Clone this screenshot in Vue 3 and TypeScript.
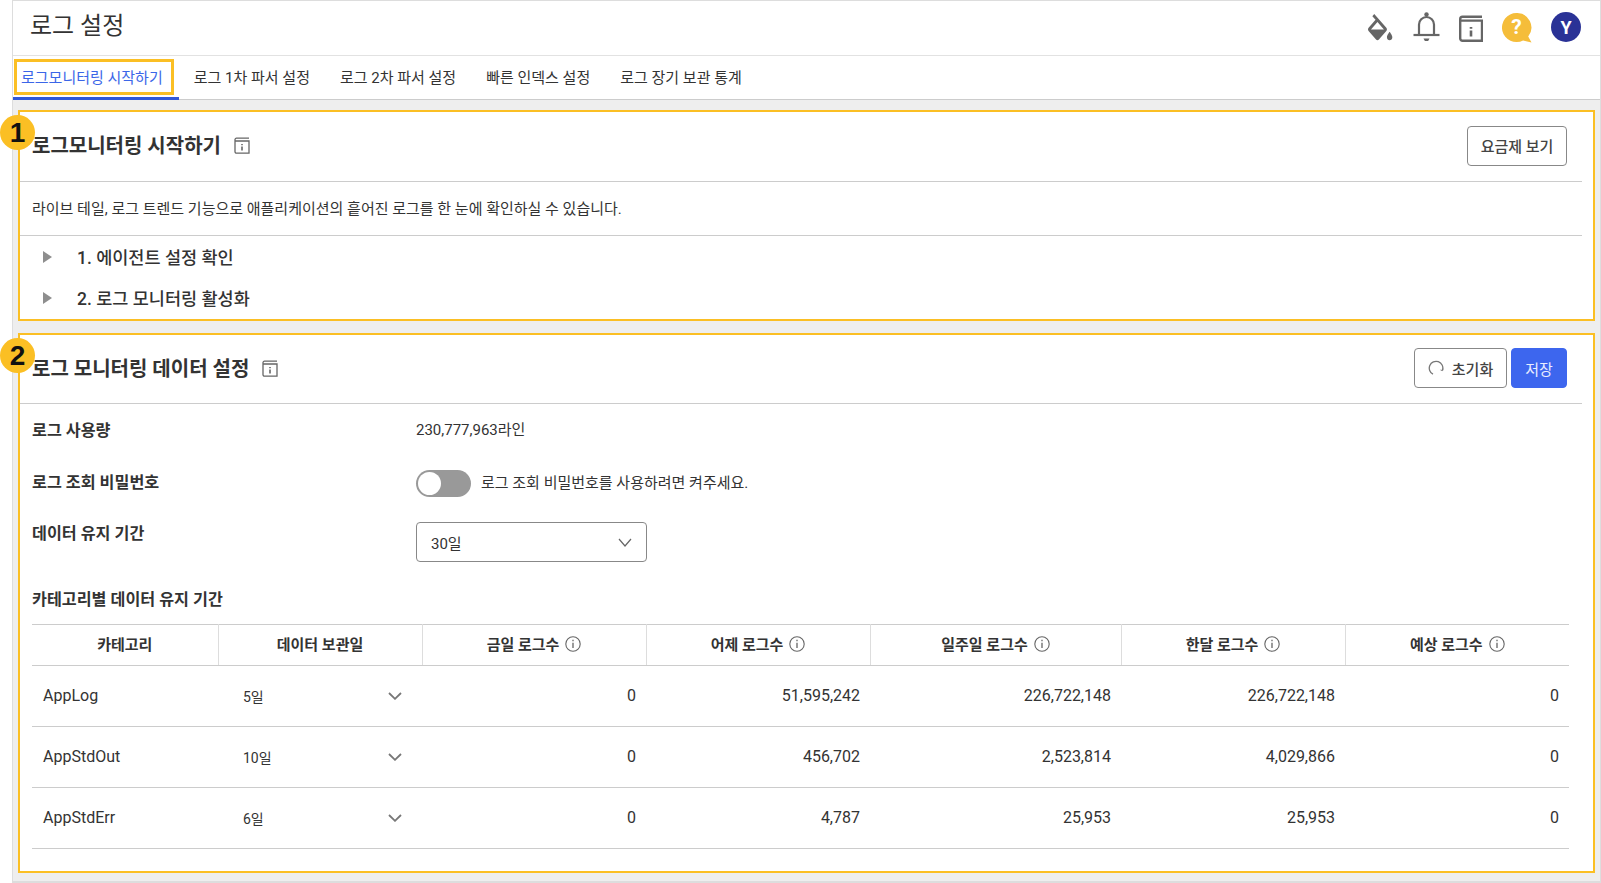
<template>
  <div class="page">
    <div class="frame">
      <header class="top-bar">
        <h1 class="page-title">로그 설정</h1>
        <div class="top-icons">
          <svg class="ic-bucket" viewBox="3 0 18.5 17.5" preserveAspectRatio="none">
            <path fill="#666" fill-rule="evenodd" d="M16.56 8.94L7.62 0 6.21 1.41l2.38 2.38-5.15 5.15c-.59.59-.59 1.54 0 2.12l5.5 5.5c.29.29.68.44 1.06.44s.77-.15 1.06-.44l5.5-5.5c.59-.58.59-1.53 0-2.12zM5.21 10L10 5.21 14.79 10H5.21zM19 11.5s-2 2.17-2 3.5c0 1.1.9 2 2 2s2-.9 2-2c0-1.33-2-3.5-2-3.5z" />
          </svg>
          <svg class="ic-bell" viewBox="0 0 27 30" fill="none" stroke="#666" stroke-width="2.2">
            <path d="M6 22.5V12.5a7.5 7.5 0 0 1 15 0v10" />
            <path d="M0.5 23h26" />
            <path d="M10.5 26.5h6l-1.4 2.4h-3.2z" fill="#666" stroke="none" />
            <circle cx="13.5" cy="2.4" r="2.2" fill="#666" stroke="none" />
          </svg>
          <svg class="ic-book" viewBox="0 0 24 27" fill="none" stroke="#666" stroke-width="2.4">
            <path d="M23 1.8H3.5a2.3 2.3 0 0 0-2.3 2.3v19.4a2.3 2.3 0 0 0 2.3 2.3H23V5.6H1.5" />
            <path d="M12 12v1.8M12 15.5v6" stroke-width="2.6" />
          </svg>
          <svg class="ic-help" viewBox="0 0 30 30">
            <path fill="#f5bd3a" d="M14.5 0a14.5 14.5 0 1 0 6.6 27.4l8.4 2.1-3.3-6A14.5 14.5 0 0 0 14.5 0z" />
            <text x="14.5" y="21" text-anchor="middle" class="help-mark">?</text>
          </svg>
          <div class="avatar">Y</div>
        </div>
      </header>

      <nav class="tabs">
        <a v-for="(tab, i) in tabs" :key="tab" class="tab" :class="{ active: i === 0 }">{{ tab }}</a>
      </nav>

      <main class="content">
        <section class="card">
          <span class="badge">1</span>
          <div class="card-head head-one">
            <h2 class="card-title">로그모니터링 시작하기</h2>
            <svg class="ic-title" viewBox="0 0 16 17" fill="none" stroke="#666" stroke-width="1.3">
              <path d="M15 1.2H2.5A1.5 1.5 0 0 0 1 2.7v12a1.5 1.5 0 0 0 1.5 1.5H15V4H1" />
              <path d="M8 7v1.2M8 9.5v4" stroke-width="1.6" />
            </svg>
            <div class="head-actions">
              <button class="btn btn-plan">요금제 보기</button>
            </div>
          </div>
          <p class="card-desc">라이브 테일, 로그 트렌드 기능으로 애플리케이션의 흩어진 로그를 한 눈에 확인하실 수 있습니다.</p>
          <ul class="steps">
            <li v-for="step in steps" :key="step" class="step">
              <span class="caret"></span>
              <span>{{ step }}</span>
            </li>
          </ul>
        </section>

        <section class="card card-data">
          <span class="badge">2</span>
          <div class="card-head head-two">
            <h2 class="card-title">로그 모니터링 데이터 설정</h2>
            <svg class="ic-title" viewBox="0 0 16 17" fill="none" stroke="#666" stroke-width="1.3">
              <path d="M15 1.2H2.5A1.5 1.5 0 0 0 1 2.7v12a1.5 1.5 0 0 0 1.5 1.5H15V4H1" />
              <path d="M8 7v1.2M8 9.5v4" stroke-width="1.6" />
            </svg>
            <div class="head-actions">
              <button class="btn btn-reset">
                <svg class="ic-reset" viewBox="0 0 16 16" fill="none" stroke="#777" stroke-width="1.3">
                  <path d="M5 14.2A6.8 6.8 0 1 1 14.6 10" />
                  <path d="M14.8 8.6l-.2 2-2-.6" stroke-width="1" />
                </svg>
                초기화
              </button>
              <button class="btn btn-save">저장</button>
            </div>
          </div>

          <div class="form">
            <div class="form-row row-usage">
              <span class="form-label">로그 사용량</span>
              <span class="form-value">230,777,963라인</span>
            </div>
            <div class="form-row row-pass">
              <span class="form-label">로그 조회 비밀번호</span>
              <span class="toggle"><span class="knob"></span></span>
              <span class="form-value">로그 조회 비밀번호를 사용하려면 켜주세요.</span>
            </div>
            <div class="form-row row-keep">
              <span class="form-label">데이터 유지 기간</span>
              <div class="select">
                <span>30일</span>
                <svg viewBox="0 0 14 9" fill="none" stroke="#666" stroke-width="1.2" class="ic-select">
                  <path d="M1 1l6 7 6-7" />
                </svg>
              </div>
            </div>
            <h3 class="form-label sub-title">카테고리별 데이터 유지 기간</h3>
          </div>

          <table class="log-table">
            <colgroup>
              <col v-for="w in colWidths" :key="w.id" :style="{ width: w.px + 'px' }" />
            </colgroup>
            <thead>
              <tr>
                <th>카테고리</th>
                <th>데이터 보관일</th>
                <th v-for="h in countHeads" :key="h">
                  <span class="th-inner">
                    {{ h }}
                    <svg class="ic-info" viewBox="0 0 16 16" fill="none" stroke="#666">
                      <circle cx="8" cy="8" r="7.2" stroke-width="1.1" />
                      <path d="M8 3.8v1.5M8 6.8v5.2" stroke-width="1.3" />
                    </svg>
                  </span>
                </th>
              </tr>
            </thead>
            <tbody>
              <tr v-for="row in rows" :key="row.name">
                <td class="cell-name">{{ row.name }}</td>
                <td class="cell-keep">
                  <div class="cell-select">
                    <span>{{ row.keep }}</span>
                    <svg viewBox="0 0 14 8" fill="none" stroke="#777" stroke-width="1.8" class="ic-chevron">
                      <path d="M1 1l6 5.8L13 1" />
                    </svg>
                  </div>
                </td>
                <td v-for="(n, i) in row.counts" :key="i" class="cell-num">{{ n }}</td>
              </tr>
            </tbody>
          </table>
        </section>
      </main>
    </div>
  </div>
</template>

<script setup lang="ts">
const tabs = ['로그모니터링 시작하기', '로그 1차 파서 설정', '로그 2차 파서 설정', '빠른 인덱스 설정', '로그 장기 보관 통계']
const steps = ['1. 에이전트 설정 확인', '2. 로그 모니터링 활성화']
const countHeads = ['금일 로그수', '어제 로그수', '일주일 로그수', '한달 로그수', '예상 로그수']
const colWidths = [186, 204, 224, 224, 251, 224, 224].map((px, id) => ({ id, px }))

const rows = [
  { name: 'AppLog', keep: '5일', counts: ['0', '51,595,242', '226,722,148', '226,722,148', '0'] },
  { name: 'AppStdOut', keep: '10일', counts: ['0', '456,702', '2,523,814', '4,029,866', '0'] },
  { name: 'AppStdErr', keep: '6일', counts: ['0', '4,787', '25,953', '25,953', '0'] },
]
</script>

<style>
html,
body {
  margin: 0;
  background: #fff;
}
</style>

<style scoped>
.page {
  width: 1601px;
  height: 883px;
  padding-left: 12px;
  box-sizing: border-box;
  overflow: hidden;
  font-family: 'Roboto', 'Noto Sans CJK KR', sans-serif;
  color: #222;
}

.frame {
  height: 883px;
  box-sizing: border-box;
  display: flex;
  flex-direction: column;
  border: 1px solid #ddd;
  border-bottom-width: 2px;
}

.top-bar {
  height: 55px;
  flex: none;
  box-sizing: border-box;
  display: flex;
  align-items: center;
  justify-content: space-between;
  padding: 0 19px 0 17px;
  border-bottom: 1px solid #e2e2e2;
}

.page-title {
  margin: 0 0 9px;
  font-size: 24px;
  font-weight: 400;
  color: #333;
}

.top-icons {
  display: flex;
  align-items: center;
  gap: 0;
}

.ic-bucket {
  width: 25px;
  height: 27px;
  margin-right: 20px;
  margin-top: -1px;
}

.ic-bell {
  width: 27px;
  height: 30px;
  margin-right: 19px;
  margin-top: -2px;
}

.ic-book {
  width: 24px;
  height: 27px;
  margin-right: 19px;
}

.ic-help {
  width: 30px;
  height: 30px;
  margin-right: 19px;
  margin-top: -1px;
}

.help-mark {
  font-family: 'Roboto', sans-serif;
  font-size: 21px;
  font-weight: 700;
  fill: #fff;
}

.avatar {
  width: 30px;
  height: 30px;
  border-radius: 50%;
  background: #2a3296;
  color: #fff;
  font-size: 18px;
  font-weight: 700;
  display: flex;
  align-items: center;
  justify-content: center;
  margin-top: -2px;
}

.tabs {
  height: 44px;
  flex: none;
  box-sizing: border-box;
  display: flex;
  border-bottom: 1px solid #ccc;
}

.tab {
  position: relative;
  display: flex;
  align-items: center;
  height: 44px;
  box-sizing: border-box;
  padding: 0 15px;
  font-size: 15px;
  color: #333;
  white-space: nowrap;
  border-bottom: 3px solid transparent;
}

.tab.active {
  padding: 0 16px 0 8px;
  color: #3b66e8;
  border-bottom-color: #3058d8;
}

.tab.active::before {
  content: '';
  position: absolute;
  left: 1px;
  top: 3px;
  width: 160px;
  height: 36px;
  box-sizing: border-box;
  border: 3px solid #fbbf24;
}

.content {
  flex: 1;
  display: flex;
  flex-direction: column;
  gap: 12px;
  padding: 10px 5px 0;
  background: #eee;
}

.card {
  position: relative;
  flex: none;
  height: 211px;
  box-sizing: border-box;
  background: #fff;
  border: 2px solid #fbbf24;
}

.card-data {
  height: 540px;
}

.badge {
  position: absolute;
  left: -20px;
  top: 3px;
  width: 35px;
  height: 35px;
  border-radius: 50%;
  background: #fbbf24;
  color: #111;
  font-family: 'Liberation Sans', sans-serif;
  font-size: 28px;
  font-weight: 700;
  display: flex;
  align-items: center;
  justify-content: center;
  z-index: 1;
}

.card-head {
  display: flex;
  align-items: center;
  box-sizing: border-box;
  margin-right: 11px;
  padding: 0 15px 2px 12px;
  border-bottom: 1px solid #ccc;
}

.head-one {
  height: 70px;
}

.head-two {
  height: 69px;
}

.card-title {
  margin: 0 0 2px;
  font-size: 20px;
  font-weight: 700;
  color: #333;
}

.ic-title {
  width: 16px;
  height: 17px;
  margin-left: 13px;
}

.head-actions {
  margin-left: auto;
  display: flex;
  gap: 4px;
}

.btn {
  height: 40px;
  box-sizing: border-box;
  border-radius: 4px;
  border: 1px solid #888;
  background: #fff;
  font-family: inherit;
  font-size: 15px;
  font-weight: 500;
  color: #444;
  display: flex;
  align-items: center;
  justify-content: center;
  padding: 0;
}

.btn-plan {
  width: 100px;
}

.btn-reset {
  width: 93px;
  gap: 8px;
}

.ic-reset {
  width: 16px;
  height: 16px;
}

.btn-save {
  width: 56px;
  background: #3d66ee;
  border-color: #3d66ee;
  color: #e8edff;
  font-weight: 400;
}

.card-desc {
  height: 54px;
  margin: 0 11px 0 0;
  padding: 0 0 3px 12px;
  box-sizing: border-box;
  display: flex;
  align-items: center;
  font-size: 15px;
  color: #333;
  border-bottom: 1px solid #ccc;
}

.steps {
  margin: 0;
  padding: 0;
  list-style: none;
}

.step {
  height: 41px;
  display: flex;
  align-items: center;
  font-size: 17.5px;
  font-weight: 500;
  color: #333;
}

.caret {
  width: 0;
  height: 0;
  margin: 0 25px 0 23px;
  border-left: 9px solid #8e8e8e;
  border-top: 6px solid transparent;
  border-bottom: 6px solid transparent;
}

.form {
  padding: 14px 15px 0 12px;
}

.form-row {
  display: flex;
  align-items: flex-start;
}

.form-label {
  flex: none;
  width: 384px;
  margin: 0;
  font-size: 16.2px;
  font-weight: 700;
  line-height: 24px;
  color: #333;
}

.form-value {
  font-size: 15px;
  line-height: 24px;
  color: #333;
}

.row-usage {
  height: 24px;
  margin-bottom: 27px;
}

.row-usage .form-label {
  margin-top: 1px;
}

.row-pass {
  height: 28px;
  margin-bottom: 25px;
  align-items: center;
}

.row-pass .form-label {
  margin-top: -1px;
}

.toggle {
  width: 55px;
  height: 27px;
  border-radius: 14px;
  background: #999;
  display: flex;
  align-items: center;
  padding-left: 2px;
  box-sizing: border-box;
  margin-right: 10px;
}

.knob {
  width: 23px;
  height: 23px;
  border-radius: 50%;
  background: #fff;
}

.select {
  width: 231px;
  height: 40px;
  box-sizing: border-box;
  border: 1px solid #888;
  border-radius: 4px;
  display: flex;
  align-items: center;
  justify-content: space-between;
  padding: 0 14px;
  font-size: 15px;
  color: #333;
}

.ic-select {
  width: 14px;
  height: 9px;
}

.sub-title {
  width: auto;
  margin-top: 26px;
}

.log-table {
  width: 1537px;
  margin: 12px 0 0 12px;
  table-layout: fixed;
  border-collapse: collapse;
  border-top: 1px solid #ccc;
  color: #333;
}

.log-table th {
  height: 37px;
  padding: 0 0 3px;
  font-size: 15px;
  font-weight: 700;
  border-bottom: 1px solid #ccc;
  border-right: 1px solid #ddd;
}

.log-table th:last-child {
  border-right: 0;
}

.th-inner {
  display: inline-flex;
  align-items: center;
  gap: 6px;
}

.ic-info {
  width: 16px;
  height: 16px;
}

.log-table td {
  height: 59px;
  padding: 0 0 1px;
  font-size: 16px;
  border-bottom: 1px solid #ccc;
}

.cell-name {
  padding-left: 11px !important;
}

.cell-keep {
  font-size: 14px !important;
}

.cell-select {
  display: flex;
  align-items: center;
  justify-content: space-between;
  padding: 0 20px 0 25px;
}

.ic-chevron {
  width: 14px;
  height: 8px;
}

.cell-num {
  padding-right: 10px !important;
  text-align: right;
}
</style>
